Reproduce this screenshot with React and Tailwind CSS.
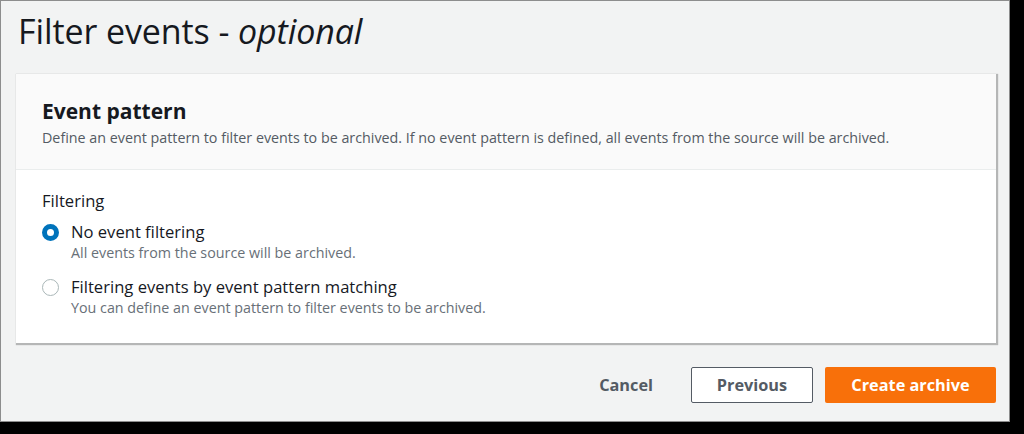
export default function App() {
  return (
    <div className="w-[1024px] h-[434px] bg-black overflow-hidden">
      <div
        className="w-[1010px] h-[422px] bg-[#f2f3f3] border border-[#8d8d8d] flex flex-col pl-[15px] pr-[13px]"
        style={{ fontFamily: '"Open Sans", "Noto Sans", sans-serif' }}
      >
        {/* TITLE */}
        <h1 className="mt-[8px] h-[48px] text-[34px] leading-[44px] text-[#16191f] pl-[2px] tracking-[-0.1px]">
          Filter events - <em className="italic">optional</em>
        </h1>

        {/* EVENT PATTERN CARD */}
        <div className="mt-[17px] bg-white shadow-[1px_1px_1px_1px_rgba(0,0,0,0.25)]">
          <div className="h-[96px] bg-[#fafafa] border-b border-[#eaeded] px-[26px] pt-[24px]">
            <h2 className="text-[21px] leading-[26px] font-bold text-[#16191f]">Event pattern</h2>
            <p className="mt-[4px] text-[14.3px] leading-[20px] text-[#545b64]">
              Define an event pattern to filter events to be archived. If no event pattern is defined, all events from the source will be archived.
            </p>
          </div>

          <div className="px-[26px] pt-[20px] pb-[25px]">
            <div className="text-[16.6px] leading-[22px] text-[#16191f]">Filtering</div>

            <div className="mt-[9px] flex flex-col gap-[13px]">
              <label className="flex items-start gap-[12px]">
                <span className="mt-[3px] w-[17px] h-[17px] rounded-full border-[5px] border-[#0073bb] bg-white shrink-0" />
                <span>
                  <span className="block text-[16.6px] leading-[22px] text-[#16191f]">No event filtering</span>
                  <span className="block text-[14.3px] leading-[20px] text-[#687078]">All events from the source will be archived.</span>
                </span>
              </label>

              <label className="flex items-start gap-[12px]">
                <span className="mt-[3px] w-[17px] h-[17px] rounded-full border border-[#aab7b8] bg-white shrink-0" />
                <span>
                  <span className="block text-[16.6px] leading-[22px] text-[#16191f]">Filtering events by event pattern matching</span>
                  <span className="block text-[14.3px] leading-[20px] text-[#687078]">You can define an event pattern to filter events to be archived.</span>
                </span>
              </label>
            </div>
          </div>
        </div>

        {/* ACTIONS */}
        <div className="mt-[24px] flex justify-end items-center">
          <button className="px-[20px] h-[36px] text-[16.3px] font-bold text-[#545b64] mr-[18px]">Cancel</button>
          <button className="w-[122px] h-[36px] border border-[#545b64] rounded-[2px] bg-white text-[16.3px] font-bold text-[#545b64]">
            Previous
          </button>
          <button className="ml-[12px] w-[171px] h-[36px] rounded-[2px] bg-[#f8700a] text-[16.3px] font-bold text-white">
            Create archive
          </button>
        </div>
      </div>
    </div>
  );
}
